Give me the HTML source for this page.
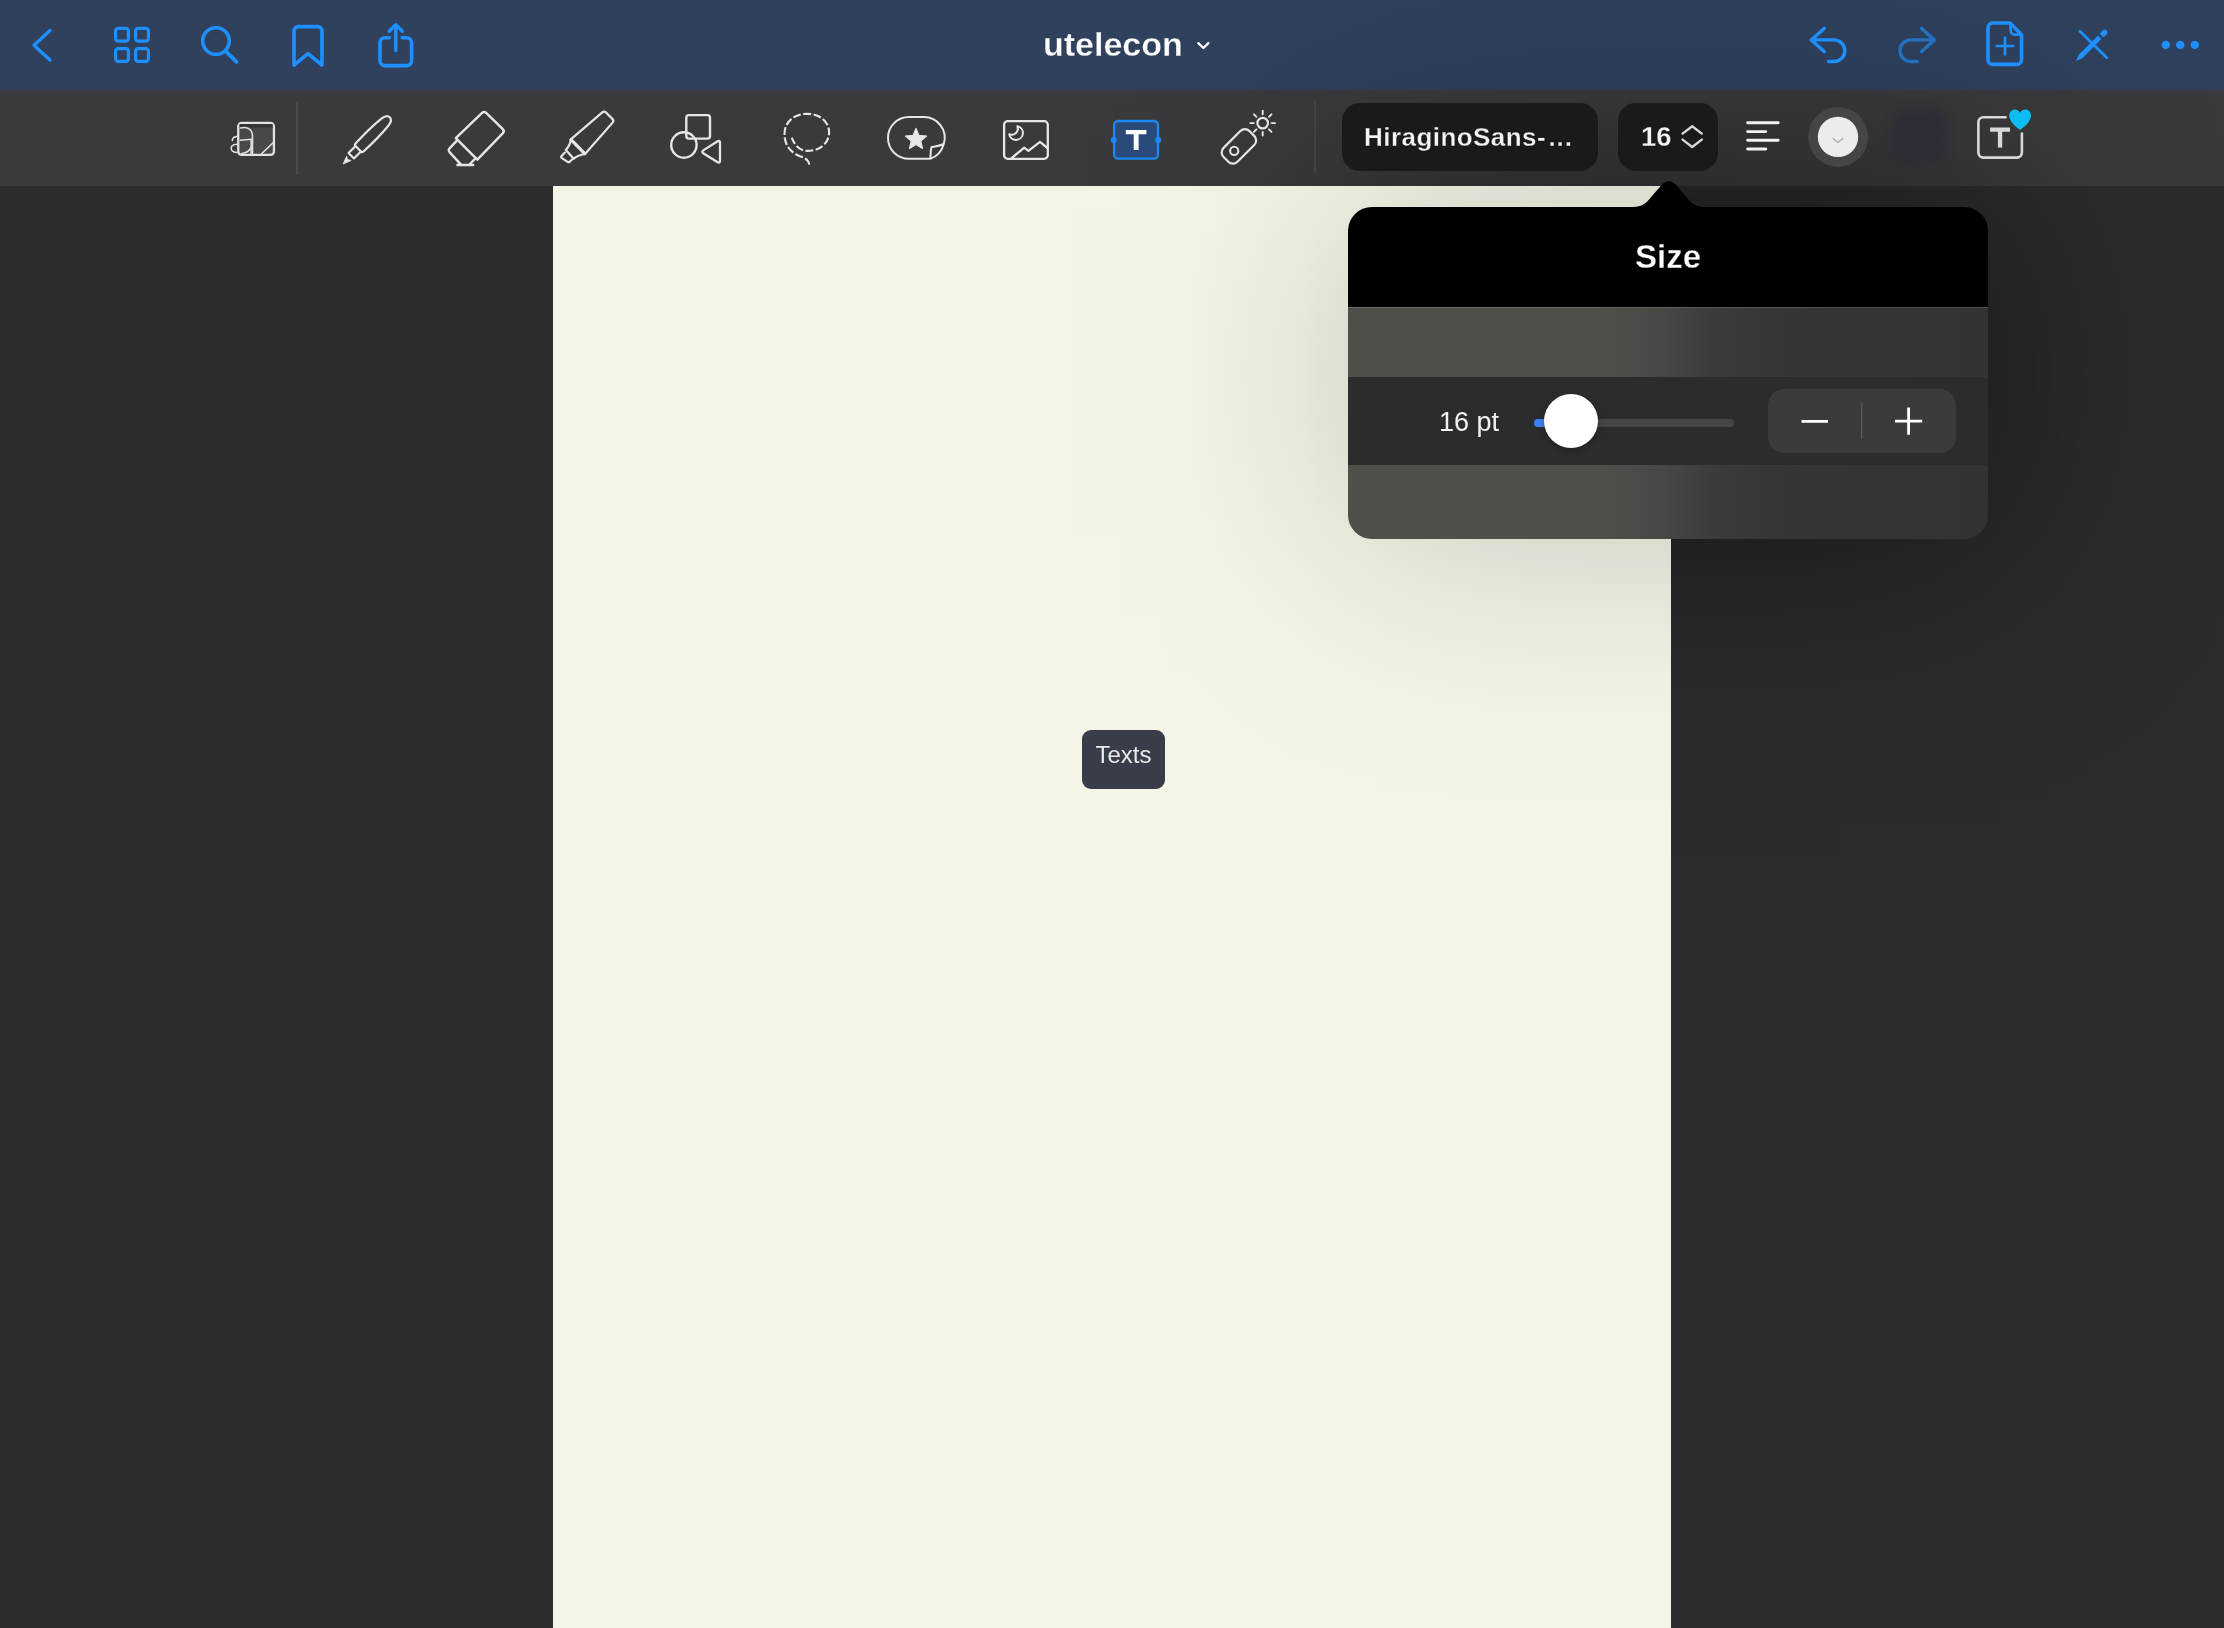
<!DOCTYPE html>
<html>
<head>
<meta charset="utf-8">
<title>utelecon</title>
<style>
html,body{margin:0;padding:0;}
body{width:2224px;height:1628px;position:relative;overflow:hidden;background:#2c2c2e;font-family:"Liberation Sans",sans-serif;}
.abs{position:absolute;}
#title,#fontname,#fsize,#poptitle,#ptlabel,#tiptext{will-change:transform;}
#nav{left:0;top:0;width:2224px;height:93px;background:linear-gradient(180deg,#30415d 0px,#30415d 87.5px,#3a3a3c 92.5px);}
#tools{left:0;top:92.5px;width:2224px;height:93.5px;background:#3a3a3c;}
#page{left:553px;top:186px;width:1118px;height:1442px;background:#f5f5e7;}
svg{position:absolute;overflow:visible;}
.b{fill:none;stroke:#1e8fff;stroke-linecap:round;stroke-linejoin:round;}
.w{fill:none;stroke:#e6e6e6;stroke-linecap:round;stroke-linejoin:round;}
#title{left:1043px;top:24px;color:#fff;font-weight:bold;-webkit-text-stroke:0.3px #30415d;font-size:34px;line-height:40px;white-space:nowrap;}
.pill{background:#1a1a1c;border-radius:18px;}
#fontname{left:1364px;top:122px;color:#f4f4f4;-webkit-text-stroke:0.3px #1a1a1c;font-weight:bold;font-size:26px;line-height:30px;white-space:nowrap;letter-spacing:0.45px;}
#fsize{left:1640.5px;top:121.6px;color:#f4f4f4;-webkit-text-stroke:0.3px #1a1a1c;font-weight:bold;font-size:27.4px;line-height:30px;}
#pop{left:1348px;top:206.6px;width:640px;height:332.8px;border-radius:24px;overflow:hidden;}
#pophead{left:0;top:0;width:640px;height:100px;background:#000;}
#poptitle{left:0;top:30.9px;width:640px;text-align:center;color:#fff;-webkit-text-stroke:0.3px #000;font-weight:bold;font-size:33px;line-height:40px;}

#shD{left:1000px;top:0px;width:1224px;height:900px;background:linear-gradient(90deg,rgba(0,0,0,0.0004) 0px,rgba(0,0,0,0.0006) 12px,rgba(0,0,0,0.0009) 24px,rgba(0,0,0,0.0013) 36px,rgba(0,0,0,0.0018) 48px,rgba(0,0,0,0.0024) 60px,rgba(0,0,0,0.0033) 72px,rgba(0,0,0,0.0045) 84px,rgba(0,0,0,0.0060) 96px,rgba(0,0,0,0.0080) 108px,rgba(0,0,0,0.0105) 120px,rgba(0,0,0,0.0136) 132px,rgba(0,0,0,0.0175) 144px,rgba(0,0,0,0.0222) 156px,rgba(0,0,0,0.0280) 168px,rgba(0,0,0,0.0348) 180px,rgba(0,0,0,0.0429) 192px,rgba(0,0,0,0.0524) 204px,rgba(0,0,0,0.0633) 216px,rgba(0,0,0,0.0757) 228px,rgba(0,0,0,0.0897) 240px,rgba(0,0,0,0.1053) 252px,rgba(0,0,0,0.1224) 264px,rgba(0,0,0,0.1410) 276px,rgba(0,0,0,0.1610) 288px,rgba(0,0,0,0.1822) 300px,rgba(0,0,0,0.2045) 312px,rgba(0,0,0,0.2275) 324px,rgba(0,0,0,0.2511) 336px,rgba(0,0,0,0.2750) 348px,rgba(0,0,0,0.2989) 360px,rgba(0,0,0,0.3225) 372px,rgba(0,0,0,0.3455) 384px,rgba(0,0,0,0.3678) 396px,rgba(0,0,0,0.3890) 408px,rgba(0,0,0,0.4090) 420px,rgba(0,0,0,0.4276) 432px,rgba(0,0,0,0.4447) 444px,rgba(0,0,0,0.4603) 456px,rgba(0,0,0,0.4743) 468px,rgba(0,0,0,0.4867) 480px,rgba(0,0,0,0.4976) 492px,rgba(0,0,0,0.5071) 504px,rgba(0,0,0,0.5152) 516px,rgba(0,0,0,0.5220) 528px,rgba(0,0,0,0.5277) 540px,rgba(0,0,0,0.5325) 552px,rgba(0,0,0,0.5363) 564px,rgba(0,0,0,0.5394) 576px,rgba(0,0,0,0.5419) 588px,rgba(0,0,0,0.5438) 600px,rgba(0,0,0,0.5453) 612px,rgba(0,0,0,0.5464) 624px,rgba(0,0,0,0.5472) 636px,rgba(0,0,0,0.5477) 648px,rgba(0,0,0,0.5480) 660px,rgba(0,0,0,0.5480) 672px,rgba(0,0,0,0.5478) 684px,rgba(0,0,0,0.5474) 696px,rgba(0,0,0,0.5467) 708px,rgba(0,0,0,0.5457) 720px,rgba(0,0,0,0.5444) 732px,rgba(0,0,0,0.5426) 744px,rgba(0,0,0,0.5403) 756px,rgba(0,0,0,0.5375) 768px,rgba(0,0,0,0.5339) 780px,rgba(0,0,0,0.5294) 792px,rgba(0,0,0,0.5240) 804px,rgba(0,0,0,0.5176) 816px,rgba(0,0,0,0.5099) 828px,rgba(0,0,0,0.5009) 840px,rgba(0,0,0,0.4905) 852px,rgba(0,0,0,0.4786) 864px,rgba(0,0,0,0.4651) 876px,rgba(0,0,0,0.4501) 888px,rgba(0,0,0,0.4335) 900px,rgba(0,0,0,0.4154) 912px,rgba(0,0,0,0.3958) 924px,rgba(0,0,0,0.3750) 936px,rgba(0,0,0,0.3531) 948px,rgba(0,0,0,0.3303) 960px,rgba(0,0,0,0.3068) 972px,rgba(0,0,0,0.2830) 984px,rgba(0,0,0,0.2591) 996px,rgba(0,0,0,0.2353) 1008px,rgba(0,0,0,0.2121) 1020px,rgba(0,0,0,0.1895) 1032px,rgba(0,0,0,0.1679) 1044px,rgba(0,0,0,0.1475) 1056px,rgba(0,0,0,0.1284) 1068px,rgba(0,0,0,0.1108) 1080px,rgba(0,0,0,0.0947) 1092px,rgba(0,0,0,0.0802) 1104px,rgba(0,0,0,0.0673) 1116px,rgba(0,0,0,0.0559) 1128px,rgba(0,0,0,0.0459) 1140px,rgba(0,0,0,0.0374) 1152px,rgba(0,0,0,0.0301) 1164px,rgba(0,0,0,0.0240) 1176px,rgba(0,0,0,0.0190) 1188px,rgba(0,0,0,0.0148) 1200px,rgba(0,0,0,0.0115) 1212px,rgba(0,0,0,0.0088) 1224px);-webkit-mask-image:linear-gradient(180deg,rgba(0,0,0,0.0302) 0px,rgba(0,0,0,0.0384) 12px,rgba(0,0,0,0.0485) 24px,rgba(0,0,0,0.0605) 36px,rgba(0,0,0,0.0747) 48px,rgba(0,0,0,0.0913) 60px,rgba(0,0,0,0.1105) 72px,rgba(0,0,0,0.1325) 84px,rgba(0,0,0,0.1573) 96px,rgba(0,0,0,0.1850) 108px,rgba(0,0,0,0.2155) 120px,rgba(0,0,0,0.2487) 132px,rgba(0,0,0,0.2845) 144px,rgba(0,0,0,0.3225) 156px,rgba(0,0,0,0.3625) 168px,rgba(0,0,0,0.4039) 180px,rgba(0,0,0,0.4464) 192px,rgba(0,0,0,0.4894) 204px,rgba(0,0,0,0.5324) 216px,rgba(0,0,0,0.5748) 228px,rgba(0,0,0,0.6161) 240px,rgba(0,0,0,0.6556) 252px,rgba(0,0,0,0.6930) 264px,rgba(0,0,0,0.7276) 276px,rgba(0,0,0,0.7592) 288px,rgba(0,0,0,0.7873) 300px,rgba(0,0,0,0.8117) 312px,rgba(0,0,0,0.8320) 324px,rgba(0,0,0,0.8481) 336px,rgba(0,0,0,0.8598) 348px,rgba(0,0,0,0.8670) 360px,rgba(0,0,0,0.8696) 372px,rgba(0,0,0,0.8677) 384px,rgba(0,0,0,0.8613) 396px,rgba(0,0,0,0.8503) 408px,rgba(0,0,0,0.8349) 420px,rgba(0,0,0,0.8153) 432px,rgba(0,0,0,0.7916) 444px,rgba(0,0,0,0.7641) 456px,rgba(0,0,0,0.7331) 468px,rgba(0,0,0,0.6989) 480px,rgba(0,0,0,0.6620) 492px,rgba(0,0,0,0.6228) 504px,rgba(0,0,0,0.5818) 516px,rgba(0,0,0,0.5395) 528px,rgba(0,0,0,0.4966) 540px,rgba(0,0,0,0.4536) 552px,rgba(0,0,0,0.4109) 564px,rgba(0,0,0,0.3693) 576px,rgba(0,0,0,0.3290) 588px,rgba(0,0,0,0.2907) 600px,rgba(0,0,0,0.2545) 612px,rgba(0,0,0,0.2208) 624px,rgba(0,0,0,0.1899) 636px,rgba(0,0,0,0.1617) 648px,rgba(0,0,0,0.1364) 660px,rgba(0,0,0,0.1140) 672px,rgba(0,0,0,0.0943) 684px,rgba(0,0,0,0.0773) 696px,rgba(0,0,0,0.0627) 708px,rgba(0,0,0,0.0503) 720px,rgba(0,0,0,0.0400) 732px,rgba(0,0,0,0.0314) 744px,rgba(0,0,0,0.0245) 756px,rgba(0,0,0,0.0188) 768px,rgba(0,0,0,0.0144) 780px,rgba(0,0,0,0.0108) 792px,rgba(0,0,0,0.0081) 804px,rgba(0,0,0,0.0060) 816px,rgba(0,0,0,0.0043) 828px,rgba(0,0,0,0.0031) 840px,rgba(0,0,0,0.0022) 852px,rgba(0,0,0,0.0016) 864px,rgba(0,0,0,0.0011) 876px,rgba(0,0,0,0.0008) 888px,rgba(0,0,0,0.0005) 900px);mask-image:linear-gradient(180deg,rgba(0,0,0,0.0302) 0px,rgba(0,0,0,0.0384) 12px,rgba(0,0,0,0.0485) 24px,rgba(0,0,0,0.0605) 36px,rgba(0,0,0,0.0747) 48px,rgba(0,0,0,0.0913) 60px,rgba(0,0,0,0.1105) 72px,rgba(0,0,0,0.1325) 84px,rgba(0,0,0,0.1573) 96px,rgba(0,0,0,0.1850) 108px,rgba(0,0,0,0.2155) 120px,rgba(0,0,0,0.2487) 132px,rgba(0,0,0,0.2845) 144px,rgba(0,0,0,0.3225) 156px,rgba(0,0,0,0.3625) 168px,rgba(0,0,0,0.4039) 180px,rgba(0,0,0,0.4464) 192px,rgba(0,0,0,0.4894) 204px,rgba(0,0,0,0.5324) 216px,rgba(0,0,0,0.5748) 228px,rgba(0,0,0,0.6161) 240px,rgba(0,0,0,0.6556) 252px,rgba(0,0,0,0.6930) 264px,rgba(0,0,0,0.7276) 276px,rgba(0,0,0,0.7592) 288px,rgba(0,0,0,0.7873) 300px,rgba(0,0,0,0.8117) 312px,rgba(0,0,0,0.8320) 324px,rgba(0,0,0,0.8481) 336px,rgba(0,0,0,0.8598) 348px,rgba(0,0,0,0.8670) 360px,rgba(0,0,0,0.8696) 372px,rgba(0,0,0,0.8677) 384px,rgba(0,0,0,0.8613) 396px,rgba(0,0,0,0.8503) 408px,rgba(0,0,0,0.8349) 420px,rgba(0,0,0,0.8153) 432px,rgba(0,0,0,0.7916) 444px,rgba(0,0,0,0.7641) 456px,rgba(0,0,0,0.7331) 468px,rgba(0,0,0,0.6989) 480px,rgba(0,0,0,0.6620) 492px,rgba(0,0,0,0.6228) 504px,rgba(0,0,0,0.5818) 516px,rgba(0,0,0,0.5395) 528px,rgba(0,0,0,0.4966) 540px,rgba(0,0,0,0.4536) 552px,rgba(0,0,0,0.4109) 564px,rgba(0,0,0,0.3693) 576px,rgba(0,0,0,0.3290) 588px,rgba(0,0,0,0.2907) 600px,rgba(0,0,0,0.2545) 612px,rgba(0,0,0,0.2208) 624px,rgba(0,0,0,0.1899) 636px,rgba(0,0,0,0.1617) 648px,rgba(0,0,0,0.1364) 660px,rgba(0,0,0,0.1140) 672px,rgba(0,0,0,0.0943) 684px,rgba(0,0,0,0.0773) 696px,rgba(0,0,0,0.0627) 708px,rgba(0,0,0,0.0503) 720px,rgba(0,0,0,0.0400) 732px,rgba(0,0,0,0.0314) 744px,rgba(0,0,0,0.0245) 756px,rgba(0,0,0,0.0188) 768px,rgba(0,0,0,0.0144) 780px,rgba(0,0,0,0.0108) 792px,rgba(0,0,0,0.0081) 804px,rgba(0,0,0,0.0060) 816px,rgba(0,0,0,0.0043) 828px,rgba(0,0,0,0.0031) 840px,rgba(0,0,0,0.0022) 852px,rgba(0,0,0,0.0016) 864px,rgba(0,0,0,0.0011) 876px,rgba(0,0,0,0.0008) 888px,rgba(0,0,0,0.0005) 900px);}
#page{overflow:hidden;}
#shL{left:347px;top:0px;width:771px;height:734px;background:linear-gradient(90deg,rgba(0,0,0,0.0000) 0px,rgba(0,0,0,0.0000) 12px,rgba(0,0,0,0.0000) 24px,rgba(0,0,0,0.0000) 36px,rgba(0,0,0,0.0001) 48px,rgba(0,0,0,0.0001) 60px,rgba(0,0,0,0.0001) 72px,rgba(0,0,0,0.0002) 84px,rgba(0,0,0,0.0002) 96px,rgba(0,0,0,0.0003) 108px,rgba(0,0,0,0.0005) 120px,rgba(0,0,0,0.0006) 132px,rgba(0,0,0,0.0009) 144px,rgba(0,0,0,0.0012) 156px,rgba(0,0,0,0.0016) 168px,rgba(0,0,0,0.0021) 180px,rgba(0,0,0,0.0027) 192px,rgba(0,0,0,0.0036) 204px,rgba(0,0,0,0.0046) 216px,rgba(0,0,0,0.0059) 228px,rgba(0,0,0,0.0074) 240px,rgba(0,0,0,0.0093) 252px,rgba(0,0,0,0.0115) 264px,rgba(0,0,0,0.0141) 276px,rgba(0,0,0,0.0172) 288px,rgba(0,0,0,0.0208) 300px,rgba(0,0,0,0.0249) 312px,rgba(0,0,0,0.0295) 324px,rgba(0,0,0,0.0347) 336px,rgba(0,0,0,0.0404) 348px,rgba(0,0,0,0.0466) 360px,rgba(0,0,0,0.0534) 372px,rgba(0,0,0,0.0607) 384px,rgba(0,0,0,0.0684) 396px,rgba(0,0,0,0.0764) 408px,rgba(0,0,0,0.0848) 420px,rgba(0,0,0,0.0934) 432px,rgba(0,0,0,0.1021) 444px,rgba(0,0,0,0.1108) 456px,rgba(0,0,0,0.1195) 468px,rgba(0,0,0,0.1280) 480px,rgba(0,0,0,0.1363) 492px,rgba(0,0,0,0.1442) 504px,rgba(0,0,0,0.1518) 516px,rgba(0,0,0,0.1589) 528px,rgba(0,0,0,0.1655) 540px,rgba(0,0,0,0.1716) 552px,rgba(0,0,0,0.1771) 564px,rgba(0,0,0,0.1821) 576px,rgba(0,0,0,0.1865) 588px,rgba(0,0,0,0.1904) 600px,rgba(0,0,0,0.1938) 612px,rgba(0,0,0,0.1968) 624px,rgba(0,0,0,0.1993) 636px,rgba(0,0,0,0.2014) 648px,rgba(0,0,0,0.2031) 660px,rgba(0,0,0,0.2046) 672px,rgba(0,0,0,0.2057) 684px,rgba(0,0,0,0.2067) 696px,rgba(0,0,0,0.2074) 708px,rgba(0,0,0,0.2080) 720px,rgba(0,0,0,0.2084) 732px,rgba(0,0,0,0.2087) 744px,rgba(0,0,0,0.2088) 756px,rgba(0,0,0,0.2089) 768px,rgba(0,0,0,0.2089) 771px);-webkit-mask-image:linear-gradient(180deg,rgba(0,0,0,0.4279) 0px,rgba(0,0,0,0.4687) 12px,rgba(0,0,0,0.5097) 24px,rgba(0,0,0,0.5504) 36px,rgba(0,0,0,0.5902) 48px,rgba(0,0,0,0.6287) 60px,rgba(0,0,0,0.6653) 72px,rgba(0,0,0,0.6997) 84px,rgba(0,0,0,0.7314) 96px,rgba(0,0,0,0.7599) 108px,rgba(0,0,0,0.7851) 120px,rgba(0,0,0,0.8066) 132px,rgba(0,0,0,0.8241) 144px,rgba(0,0,0,0.8374) 156px,rgba(0,0,0,0.8466) 168px,rgba(0,0,0,0.8513) 180px,rgba(0,0,0,0.8517) 192px,rgba(0,0,0,0.8477) 204px,rgba(0,0,0,0.8393) 216px,rgba(0,0,0,0.8266) 228px,rgba(0,0,0,0.8097) 240px,rgba(0,0,0,0.7889) 252px,rgba(0,0,0,0.7644) 264px,rgba(0,0,0,0.7364) 276px,rgba(0,0,0,0.7052) 288px,rgba(0,0,0,0.6712) 300px,rgba(0,0,0,0.6349) 312px,rgba(0,0,0,0.5967) 324px,rgba(0,0,0,0.5571) 336px,rgba(0,0,0,0.5165) 348px,rgba(0,0,0,0.4755) 360px,rgba(0,0,0,0.4346) 372px,rgba(0,0,0,0.3943) 384px,rgba(0,0,0,0.3550) 396px,rgba(0,0,0,0.3171) 408px,rgba(0,0,0,0.2810) 420px,rgba(0,0,0,0.2470) 432px,rgba(0,0,0,0.2153) 444px,rgba(0,0,0,0.1861) 456px,rgba(0,0,0,0.1594) 468px,rgba(0,0,0,0.1354) 480px,rgba(0,0,0,0.1140) 492px,rgba(0,0,0,0.0952) 504px,rgba(0,0,0,0.0787) 516px,rgba(0,0,0,0.0645) 528px,rgba(0,0,0,0.0523) 540px,rgba(0,0,0,0.0421) 552px,rgba(0,0,0,0.0335) 564px,rgba(0,0,0,0.0265) 576px,rgba(0,0,0,0.0207) 588px,rgba(0,0,0,0.0160) 600px,rgba(0,0,0,0.0123) 612px,rgba(0,0,0,0.0093) 624px,rgba(0,0,0,0.0070) 636px,rgba(0,0,0,0.0052) 648px,rgba(0,0,0,0.0038) 660px,rgba(0,0,0,0.0028) 672px,rgba(0,0,0,0.0020) 684px,rgba(0,0,0,0.0014) 696px,rgba(0,0,0,0.0010) 708px,rgba(0,0,0,0.0007) 720px,rgba(0,0,0,0.0005) 732px,rgba(0,0,0,0.0005) 734px);mask-image:linear-gradient(180deg,rgba(0,0,0,0.4279) 0px,rgba(0,0,0,0.4687) 12px,rgba(0,0,0,0.5097) 24px,rgba(0,0,0,0.5504) 36px,rgba(0,0,0,0.5902) 48px,rgba(0,0,0,0.6287) 60px,rgba(0,0,0,0.6653) 72px,rgba(0,0,0,0.6997) 84px,rgba(0,0,0,0.7314) 96px,rgba(0,0,0,0.7599) 108px,rgba(0,0,0,0.7851) 120px,rgba(0,0,0,0.8066) 132px,rgba(0,0,0,0.8241) 144px,rgba(0,0,0,0.8374) 156px,rgba(0,0,0,0.8466) 168px,rgba(0,0,0,0.8513) 180px,rgba(0,0,0,0.8517) 192px,rgba(0,0,0,0.8477) 204px,rgba(0,0,0,0.8393) 216px,rgba(0,0,0,0.8266) 228px,rgba(0,0,0,0.8097) 240px,rgba(0,0,0,0.7889) 252px,rgba(0,0,0,0.7644) 264px,rgba(0,0,0,0.7364) 276px,rgba(0,0,0,0.7052) 288px,rgba(0,0,0,0.6712) 300px,rgba(0,0,0,0.6349) 312px,rgba(0,0,0,0.5967) 324px,rgba(0,0,0,0.5571) 336px,rgba(0,0,0,0.5165) 348px,rgba(0,0,0,0.4755) 360px,rgba(0,0,0,0.4346) 372px,rgba(0,0,0,0.3943) 384px,rgba(0,0,0,0.3550) 396px,rgba(0,0,0,0.3171) 408px,rgba(0,0,0,0.2810) 420px,rgba(0,0,0,0.2470) 432px,rgba(0,0,0,0.2153) 444px,rgba(0,0,0,0.1861) 456px,rgba(0,0,0,0.1594) 468px,rgba(0,0,0,0.1354) 480px,rgba(0,0,0,0.1140) 492px,rgba(0,0,0,0.0952) 504px,rgba(0,0,0,0.0787) 516px,rgba(0,0,0,0.0645) 528px,rgba(0,0,0,0.0523) 540px,rgba(0,0,0,0.0421) 552px,rgba(0,0,0,0.0335) 564px,rgba(0,0,0,0.0265) 576px,rgba(0,0,0,0.0207) 588px,rgba(0,0,0,0.0160) 600px,rgba(0,0,0,0.0123) 612px,rgba(0,0,0,0.0093) 624px,rgba(0,0,0,0.0070) 636px,rgba(0,0,0,0.0052) 648px,rgba(0,0,0,0.0038) 660px,rgba(0,0,0,0.0028) 672px,rgba(0,0,0,0.0020) 684px,rgba(0,0,0,0.0014) 696px,rgba(0,0,0,0.0010) 708px,rgba(0,0,0,0.0007) 720px,rgba(0,0,0,0.0005) 732px,rgba(0,0,0,0.0005) 734px);}
#popbody{left:0;top:100px;width:640px;height:233px;background:linear-gradient(90deg,#50504b 0px,#50504b 250px,#484845 310px,#3c3c3b 365px,#363637 425px,#343435 505px,#333334 640px);}
#popsep{left:0;top:100px;width:640px;height:1px;background:rgba(255,255,255,0.13);}
#band{left:0;top:170.2px;width:640px;height:88px;background:#2c2c2e;}
#ptlabel{left:91px;top:199.4px;color:#f2f2f2;font-size:27px;line-height:32px;white-space:nowrap;}
#track{left:186px;top:212.4px;width:200px;height:8px;border-radius:4px;background:#454548;}
#trackb{left:186px;top:212.4px;width:30px;height:8px;border-radius:4px;background:#3a82f0;}
#thumb{left:196px;top:187.3px;width:54px;height:54px;border-radius:27px;background:#fff;box-shadow:0 3px 6px rgba(0,0,0,0.25);}
#stepper{left:420px;top:182.4px;width:188px;height:63.8px;border-radius:16px;background:#3b3b3f;}
#tip{left:1082px;top:730px;width:83px;height:59px;border-radius:9px;background:#393d49;}
#tiptext{left:0;top:10px;width:83px;text-align:center;color:#e9e9e9;font-size:24px;line-height:30px;}
</style>
</head>
<body>
<div id="nav" class="abs"></div>
<div id="tools" class="abs"></div>
<div class="abs" id="shD"></div>
<div id="page" class="abs"><div class="abs" id="shL"></div></div>

<svg class="abs" style="left:0;top:0" width="2224" height="89" viewBox="0 0 2224 89" stroke-width="3.4">
<!-- back -->
<path class="b" d="M50 30.5 L34 45.2 L50 60"/>
<!-- grid -->
<g class="b" stroke-width="3.2">
<rect x="115.6" y="28.4" width="12.8" height="12.8" rx="2.6"/>
<rect x="135.6" y="28.4" width="12.8" height="12.8" rx="2.6"/>
<rect x="115.6" y="48.6" width="12.8" height="12.8" rx="2.6"/>
<rect x="135.6" y="48.6" width="12.8" height="12.8" rx="2.6"/>
</g>
<!-- search -->
<circle class="b" cx="216" cy="41" r="13.3" stroke-width="3.6"/>
<path class="b" d="M226 51.3 L236.4 61.8" stroke-width="3.8"/>
<!-- bookmark -->
<path class="b" stroke-width="3.6" d="M294 65.2 V31 a4.4 4.4 0 0 1 4.4 -4.4 H317.6 a4.4 4.4 0 0 1 4.4 4.4 V65.2 L308 53.6 Z"/>
<!-- share -->
<path class="b" stroke-width="3.6" d="M389.4 37.7 H385 a5 5 0 0 0 -5 5 V60.6 a5 5 0 0 0 5 5 H406.6 a5 5 0 0 0 5 -5 V42.7 a5 5 0 0 0 -5 -5 H402.2"/>
<path class="b" stroke-width="3.4" d="M395.8 50.6 V25.4 M389.2 31.2 L395.8 24.8 L402.4 31.2"/>
<!-- undo -->
<path class="b" d="M1824.2 28.4 L1811.4 39.9 L1824.2 51.6 M1812.4 39.9 H1834 a10.8 10.8 0 0 1 0 21.6 H1828.6"/>
<!-- redo -->
<g opacity="0.62"><path class="b" d="M1921.6 28.4 L1934.4 39.9 L1921.6 51.6 M1933.4 39.9 H1910.8 a10.8 10.8 0 0 0 0 21.6 H1917.2"/></g>
<!-- doc plus -->
<path class="b" stroke-width="3.6" d="M1993 23 H2010 L2021.6 34.8 V59.4 a5 5 0 0 1 -5 5 H1993 a5 5 0 0 1 -5 -5 V28 a5 5 0 0 1 5 -5 Z"/>
<path class="b" stroke-width="2.6" d="M2010.6 23.6 V30.6 a4 4 0 0 0 4 4 H2021"/>
<path class="b" stroke-width="2.7" d="M1996.8 46 H2013.2 M2005 37.8 V54.4"/>
<!-- pencil cross -->
<path class="b" stroke-width="2.8" d="M2080 31.2 L2106.8 57.8"/>
<path d="M2076 61 L2078.6 55 L2098 35.6 L2101.4 39 L2082 58.4 Z" fill="#1e8fff"/>
<path d="M2099.6 33.6 L2102.6 30.6 a2.8 2.8 0 0 1 4 4 L2103.6 37.6 Z" fill="#1e8fff"/>
<!-- dots -->
<circle cx="2165.8" cy="44.9" r="4.2" fill="#1e8fff"/>
<circle cx="2180.3" cy="44.9" r="4.2" fill="#1e8fff"/>
<circle cx="2194.8" cy="44.9" r="4.2" fill="#1e8fff"/>
<!-- title chevron -->
<path d="M1198.4 43.2 L1203.4 48 L1208.4 43.2" fill="none" stroke="#fff" stroke-width="2.4" stroke-linecap="round" stroke-linejoin="round"/>
</svg>

<div id="title" class="abs">utelecon</div>

<div class="abs pill" style="left:1342px;top:103px;width:256px;height:68px;"></div>
<div class="abs pill" style="left:1618px;top:103px;width:100px;height:68px;"></div>
<svg class="abs" style="left:0;top:0" width="2224" height="190" viewBox="0 0 2224 190" stroke-width="2.3">
<!-- page thumb -->
<rect x="238.25" y="122.95" width="35.7" height="32" rx="3.4" fill="#48484a" stroke="#e2e2e2" stroke-width="2.3"/>
<rect x="239.5" y="124.1" width="33.2" height="3.4" fill="#353537"/>
<g fill="none" stroke="#e2e2e2" stroke-width="1.55" stroke-linecap="round">
<path d="M240.4 127.9 C246.4 126.5 252.5 128.4 252.5 136.6 V153.8"/>
<path d="M240.4 140.3 L251.1 139.3 V153.8"/>
<path d="M251.1 147.4 C249.6 151 245.6 153.1 241.8 153.5"/>
<path d="M232.3 140.6 C232.3 138.2 234.2 136.7 236.6 136.4"/>
<path d="M236.8 144.2 C233.2 144.4 231.2 146.2 231.2 148.3 C231.2 150.6 233.4 152.3 236.8 152.5"/>
<path d="M261.6 153.8 L273 142.7"/>
</g>
<!-- dividers -->
<rect x="296" y="102" width="2" height="73" fill="#4a4a4c"/>
<rect x="1314" y="101" width="2" height="72" fill="#424244"/>
<!-- pen -->
<g transform="translate(343.1 163.9) rotate(-45)" class="w" stroke-width="2.2">
<path d="M0.4 0 L7.9 -2.9 L6.1 0 L7.9 2.9 Z" fill="#ececec" stroke-width="0.9"/>
<path d="M21.4 -3.8 H11.5 V3.8 H21.4"/>
<path d="M21.4 -4.2 Q21.4 -5.5 22.8 -5.55 C33 -6.1 48 -6.2 59.6 -4.9 Q66 -4 66 0 Q66 4 59.6 4.9 C48 6.2 33 6.1 22.8 5.55 Q21.4 5.5 21.4 4.2 Z"/>
</g>
<!-- eraser -->
<path class="w" stroke-width="2.4" d="M455.8 138.2 L481.8 113.2 Q484.1 111 486.4 113.2 L502.6 128.8 Q504.9 131 502.7 133.4 L477.3 159.6 Z"/>
<path class="w" stroke-width="2.4" d="M456.4 141.2 L450 147.8 Q447.6 150.2 450 152.6 L461 164.6 M457.4 165 H473.2 M469.4 164.6 L474.8 159"/>
<!-- highlighter -->
<path class="w" stroke-width="2.2" d="M570.8 139.4 L602.3 112.3 Q604.2 110.7 606 112.5 L612.4 118.9 Q614.2 120.7 612.6 122.6 L585 154"/>
<path class="w" stroke-width="3.3" d="M571.2 139.8 L584.8 153.6"/>
<path class="w" stroke-width="2.2" d="M570.8 139.4 C570.4 145 568.4 147.2 565.8 150 L573.8 158.8 C576.4 156.2 579 155 585 154"/>
<path class="w" stroke-width="2.2" d="M564.9 152.6 L561.6 156 Q560.5 157.2 561.9 158.1 L567.6 161.8 Q568.9 162.6 570 161.5 L572.3 159.3"/>
<!-- shapes -->
<rect class="w" stroke-width="2.4" x="686.3" y="115.1" width="23.7" height="23.5" rx="2.6"/>
<circle class="w" stroke-width="2.4" cx="683.9" cy="145" r="12.7"/>
<path class="w" stroke-width="2.3" d="M703.62 153.49 Q700.90 151.80 703.62 150.11 L717.28 141.59 Q720.00 139.90 720.00 143.10 L720.00 160.50 Q720.00 163.70 717.28 162.01 Z"/>
<!-- lasso -->
<path class="w" style="stroke-linecap:butt" stroke-width="2.15" stroke-dasharray="7.8 2.5" d="M809.3 164.6 C808.4 159.6 804.6 157.6 800 156.2 C794 154 789.6 150 787.2 145.6 C785 141.6 784.4 137 784.6 132.5 C785.2 121 795 113.8 807 113.8 C819.2 113.8 829.1 121 829.1 132.4 C829.1 143.8 819.2 150.9 807.6 150.9 C800.2 150.9 794.4 145.6 791.8 137.7"/>
<!-- sticker -->
<path class="w" stroke-width="2" d="M930.2 158.8 H908.9 A20.9 20.9 0 0 1 908.9 117 H923.1 A20.9 20.9 0 0 1 943.8 144 C938.6 146.4 934.4 146.6 931.4 147.2 C930.6 150.4 930.8 154.6 930.2 158.8 C936.6 156.6 941.8 151 943.8 144"/>
<path d="M916.00 128.40 L918.94 135.45 L926.56 136.07 L920.76 141.05 L922.52 148.48 L916.00 144.50 L909.48 148.48 L911.24 141.05 L905.44 136.07 L913.06 135.45 Z" fill="#e6e6e6" stroke="#e6e6e6" stroke-width="1.2" stroke-linejoin="round"/>
<!-- image -->
<rect class="w" stroke-width="2.3" x="1004.1" y="121.2" width="43.7" height="37.6" rx="3.6"/>
<path class="w" stroke-width="2" d="M1017.3 126.2 A6.91 6.91 0 1 1 1009.2 134.2 A6.11 6.11 0 0 0 1017.3 126.2 Z"/>
<path class="w" stroke-width="2.3" d="M1011.8 158 L1024.2 147.7 L1028.4 150.9 L1040 141.9 L1047.4 148"/>
<!-- text tool -->
<rect x="1114.1" y="121" width="43.9" height="37.6" rx="4" fill="#2a4a7a" stroke="#1e88f2" stroke-width="2.3"/>
<circle cx="1113.8" cy="140" r="3.1" fill="#1e88f2"/>
<circle cx="1158.2" cy="140" r="3.1" fill="#1e88f2"/>
<path d="M1125.8 129.9 H1146.4 V134.2 H1138.6 V150 H1133.7 V134.2 H1125.8 Z" fill="#fff"/>
<!-- laser -->
<g transform="translate(1238.9 146.4) rotate(-45)">
<rect class="w" stroke-width="2.2" x="-18.3" y="-9.8" width="36.6" height="19.6" rx="6.4"/>
</g>
<circle class="w" stroke-width="2.1" cx="1234.2" cy="150.9" r="4.1"/>
<circle class="w" stroke-width="2.2" cx="1262.7" cy="123.1" r="5.3"/>
<path class="w" stroke-width="1.9" d="M1271.60 123.10 L1275.10 123.10 M1268.99 129.39 L1271.47 131.87 M1262.70 132.00 L1262.70 135.50 M1256.41 129.39 L1253.93 131.87 M1253.80 123.10 L1250.30 123.10 M1256.41 116.81 L1253.93 114.33 M1262.70 114.20 L1262.70 110.70 M1268.99 116.81 L1271.47 114.33 "/>
<!-- size chevrons -->
<path d="M1682.6 133.6 L1692.2 126.2 L1701.8 133.6 M1682.6 139.6 L1692.2 147 L1701.8 139.6" fill="none" stroke="#d8d8d8" stroke-width="2.4" stroke-linecap="round" stroke-linejoin="round"/>
<!-- align -->
<path d="M1747.6 122.8 H1778.2 M1747.6 131.6 H1765.8 M1747.6 140.3 H1778.2 M1747.6 149 H1765.8" fill="none" stroke="#f2f2f2" stroke-width="2.9" stroke-linecap="round"/>
<!-- color -->
<circle cx="1838.1" cy="136.9" r="30" fill="#444547"/>
<circle cx="1838" cy="136.9" r="20.2" fill="#ececec"/>
<path d="M1833 138.6 L1837.9 142.6 L1842.8 138.6" fill="none" stroke="#adadad" stroke-width="1.3" stroke-linecap="round" stroke-linejoin="round"/>
<!-- faint square -->
<rect x="1893" y="109" width="54" height="54" rx="11" fill="#2a2d37" opacity="0.7" style="filter:blur(4px)"/>
<!-- T box with heart -->
<path d="M2005.6 117.3 H1983.4 a5 5 0 0 0 -5 5 V152.6 a5 5 0 0 0 5 5 H2016.9 a5 5 0 0 0 5 -5 V133.6" fill="none" stroke="#d9d9d9" stroke-width="2.6" stroke-linecap="round"/>
<path d="M1990.1 127.5 H2010 V131.8 H2002.2 V147.6 H1997.9 V131.8 H1990.1 Z" fill="#d9d9d9"/>
<path d="M2020.1 130 C2016.6 127.6 2009.2 122 2009.2 115.6 C2009.2 111.8 2012 109.6 2014.8 109.6 C2017.2 109.6 2019.2 111 2020.1 112.8 C2021 111 2023 109.6 2025.4 109.6 C2028.2 109.6 2031 111.8 2031 115.6 C2031 122 2023.6 127.6 2020.1 130 Z" fill="#0bbdf2"/>
</svg>

<div id="fontname" class="abs">HiraginoSans-<span style="letter-spacing:0.85px;margin-left:2.4px">...</span></div>
<div id="fsize" class="abs">16</div>

<!-- POPOVER -->
<svg class="abs" style="left:1620px;top:176px" width="100" height="34" viewBox="1620 176 100 34"><path d="M1630 207.2 C1642 207.2 1646 203.6 1652 196 L1662 184.4 Q1668.8 177.9 1675.6 184.4 L1685.6 196 C1691.6 203.6 1695.6 207.2 1707.6 207.2 V209 H1630 Z" fill="#000"/></svg>
<div id="pop" class="abs">
  <div id="pophead" class="abs"></div>
  <div id="poptitle" class="abs">Size</div>
  <div id="popbody" class="abs"></div>
  <div id="popsep" class="abs"></div>
  <div id="band" class="abs"></div>
  <div id="ptlabel" class="abs">16 pt</div>
  <div id="track" class="abs"></div>
  <div id="trackb" class="abs"></div>
  <div id="thumb" class="abs"></div>
  <div id="stepper" class="abs"></div>
  <svg class="abs" style="left:0;top:-0.6px" width="640" height="333" viewBox="1348 206 640 333">
    <path d="M1801.6 421.3 H1828 M1895 421.2 H1922.2 M1908.6 407.6 V434.8" fill="none" stroke="#fff" stroke-width="2.8" stroke-linecap="butt"/>
    <rect x="1861" y="403" width="1.5" height="36" fill="#56565b"/>
  </svg>
</div>

<div id="tip" class="abs"><div id="tiptext" class="abs">Texts</div></div>
</body>
</html>
